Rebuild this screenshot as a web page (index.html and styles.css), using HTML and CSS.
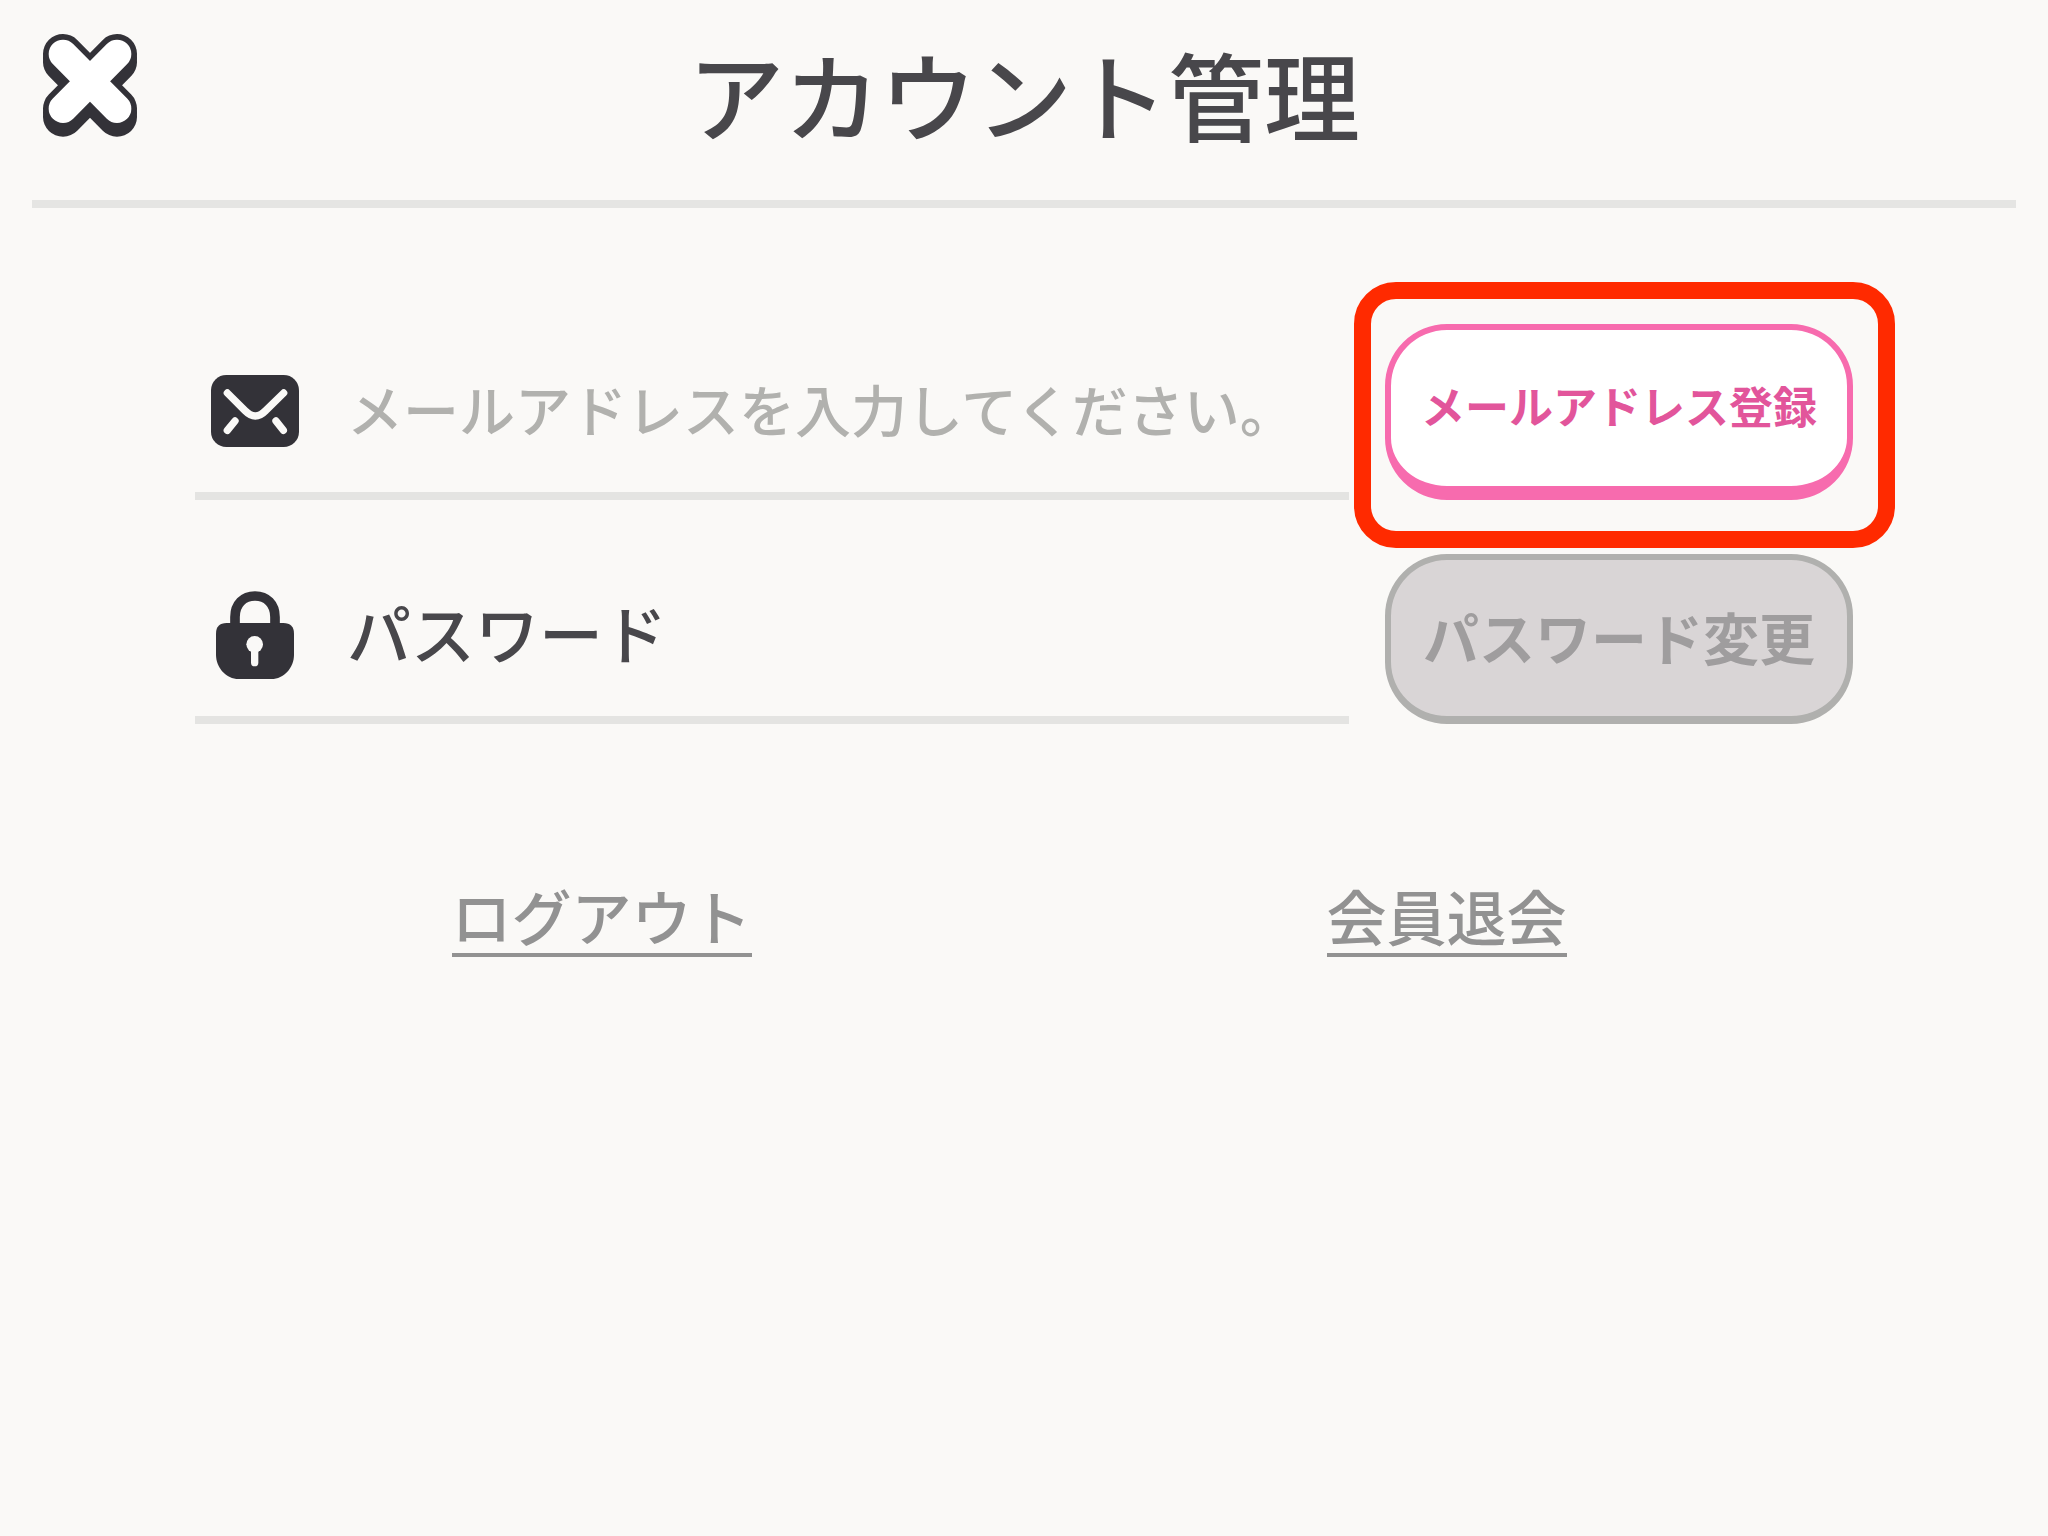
FILE: index.html
```
<!DOCTYPE html>
<html lang="ja">
<head>
    <meta charset="UTF-8">
    <meta name="viewport" content="width=device-width, initial-scale=1.0">
    <title>アカウント管理</title>
    <link rel="stylesheet" href="styles.css">
</head>
<body>

<header class="header">
    <button type="button" class="close" aria-label="閉じる">
        <svg viewBox="69 42 282 309" width="94" height="103" fill="none" stroke-linecap="round">
            <g stroke="#333238" stroke-width="120">
                <path d="M129 102L291 266M291 102L129 266"/>
                <path d="M129 114L291 278M291 114L129 278"/>
                <path d="M129 126L291 290M291 126L129 290"/>
            </g>
            <path stroke="#fff" stroke-width="86" d="M129 102L291 266M291 102L129 266"/>
        </svg>
    </button>
    <h1>アカウント管理</h1>
</header>

<main class="content">
    <form class="form">
        <div class="row">
            <div class="field">
                <label for="email" class="icon" aria-label="メールアドレス">
                    <svg viewBox="62 47 264 216" width="88" height="72" fill="none">
                        <rect x="62" y="47" width="264" height="216" rx="46" fill="#333238"/>
                        <g stroke="#faf9f7" stroke-width="22" stroke-linecap="round">
                            <path d="M111 101L164 154Q195 186 226 154L280 101"/>
                            <path d="M134 185L111 213M257 185L279 213"/>
                        </g>
                    </svg>
                </label>
                <input type="email" id="email" placeholder="メールアドレスを入力してください。">
            </div>
            <div class="action highlight">
                <button type="button" class="btn btn-pink">メールアドレス登録</button>
            </div>
        </div>

        <div class="row">
            <div class="field">
                <label for="password" class="icon" aria-label="パスワード">
                    <svg viewBox="48 59 234 264" width="78" height="88" fill="none">
                        <path stroke="#333238" stroke-width="29" d="M105 165V137C105 98 130 74 165 74S225 98 225 137V165"/>
                        <path fill="#333238" d="M80 155H250Q282 155 282 187V250C282 288 252 323 214 323H116C78 323 48 288 48 250V187Q48 155 80 155Z"/>
                        <circle cx="164" cy="219" r="25" fill="#faf9f7"/>
                        <path stroke="#faf9f7" stroke-width="22" stroke-linecap="round" d="M164 225V274"/>
                    </svg>
                </label>
                <input type="password" id="password" class="large" placeholder="パスワード">
            </div>
            <div class="action">
                <button type="button" class="btn btn-gray" disabled>パスワード変更</button>
            </div>
        </div>
    </form>

    <nav class="links">
        <a href="#logout">ログアウト</a>
        <a href="#withdraw">会員退会</a>
    </nav>
</main>

</body>
</html>
```

FILE: styles.css
```
* {
    box-sizing: border-box;
}

body {
    margin: 0;
    background: #faf9f7;
    color: #48474b;
    font-family: "Noto Sans CJK JP", sans-serif;
    font-weight: 500;
}

button, input {
    font-family: inherit;
}

svg {
    display: block;
}

.header {
    display: grid;
    grid-template-columns: 94px 1fr 94px;
    align-items: start;
    margin: 0 32px;
    padding: 34px 11px 48px;
    border-bottom: 8px solid #e5e5e3;
}

.close {
    padding: 0;
    border: none;
    background: none;
    cursor: pointer;
}

h1 {
    margin: 0;
    font-size: 96px;
    font-weight: 500;
    line-height: 118px;
    text-align: center;
}

.content {
    padding: 116px 195px 0;
}

.form {
    display: flex;
    flex-direction: column;
    gap: 54px;
}

.row {
    display: flex;
    align-items: flex-end;
    gap: 36px;
}

.field {
    flex: 1;
    display: flex;
    align-items: center;
    gap: 48px;
    height: 170px;
    padding-left: 16px;
    border-bottom: 8px solid #e4e4e2;
}

.icon {
    display: flex;
    justify-content: center;
    width: 88px;
}

.field input {
    flex: 1;
    min-width: 0;
    padding: 0 0 8px;
    border: none;
    outline: none;
    background: none;
    color: #48474b;
    font-size: 56px;
    font-weight: 500;
}

.field input::placeholder {
    color: #b1b1ae;
    opacity: 1;
}

.field input.large {
    font-size: 64px;
}

.field input.large::placeholder {
    color: #48474b;
}

.action {
    position: relative;
    width: 468px;
}

/* red frame around the button to press */
.highlight::after {
    content: "";
    position: absolute;
    inset: -42px -42px -48px -31px;
    border: 17px solid #ff2a00;
    border-radius: 42px;
    pointer-events: none;
}

.btn {
    display: block;
    width: 100%;
    padding: 0 0 6px;
    border: 6px solid;
    border-radius: 62px;
    font-weight: 700;
    white-space: nowrap;
}

.btn-pink {
    height: 176px;
    border-color: #f76bae;
    border-bottom-width: 14px;
    background: #fff;
    color: #e2559b;
    font-size: 44px;
    cursor: pointer;
}

.btn-gray {
    height: 170px;
    border-color: #b0b0ae;
    border-bottom-width: 8px;
    background: #d9d5d6;
    color: #9f9d9e;
    font-size: 56px;
}

.links {
    display: grid;
    grid-template-columns: 1fr 1fr;
    gap: 32px;
    justify-items: center;
    margin-top: 153px;
}

.links a {
    border-bottom: 4px solid #929292;
    color: #929292;
    font-size: 60px;
    line-height: 76px;
    text-decoration: none;
}
```
